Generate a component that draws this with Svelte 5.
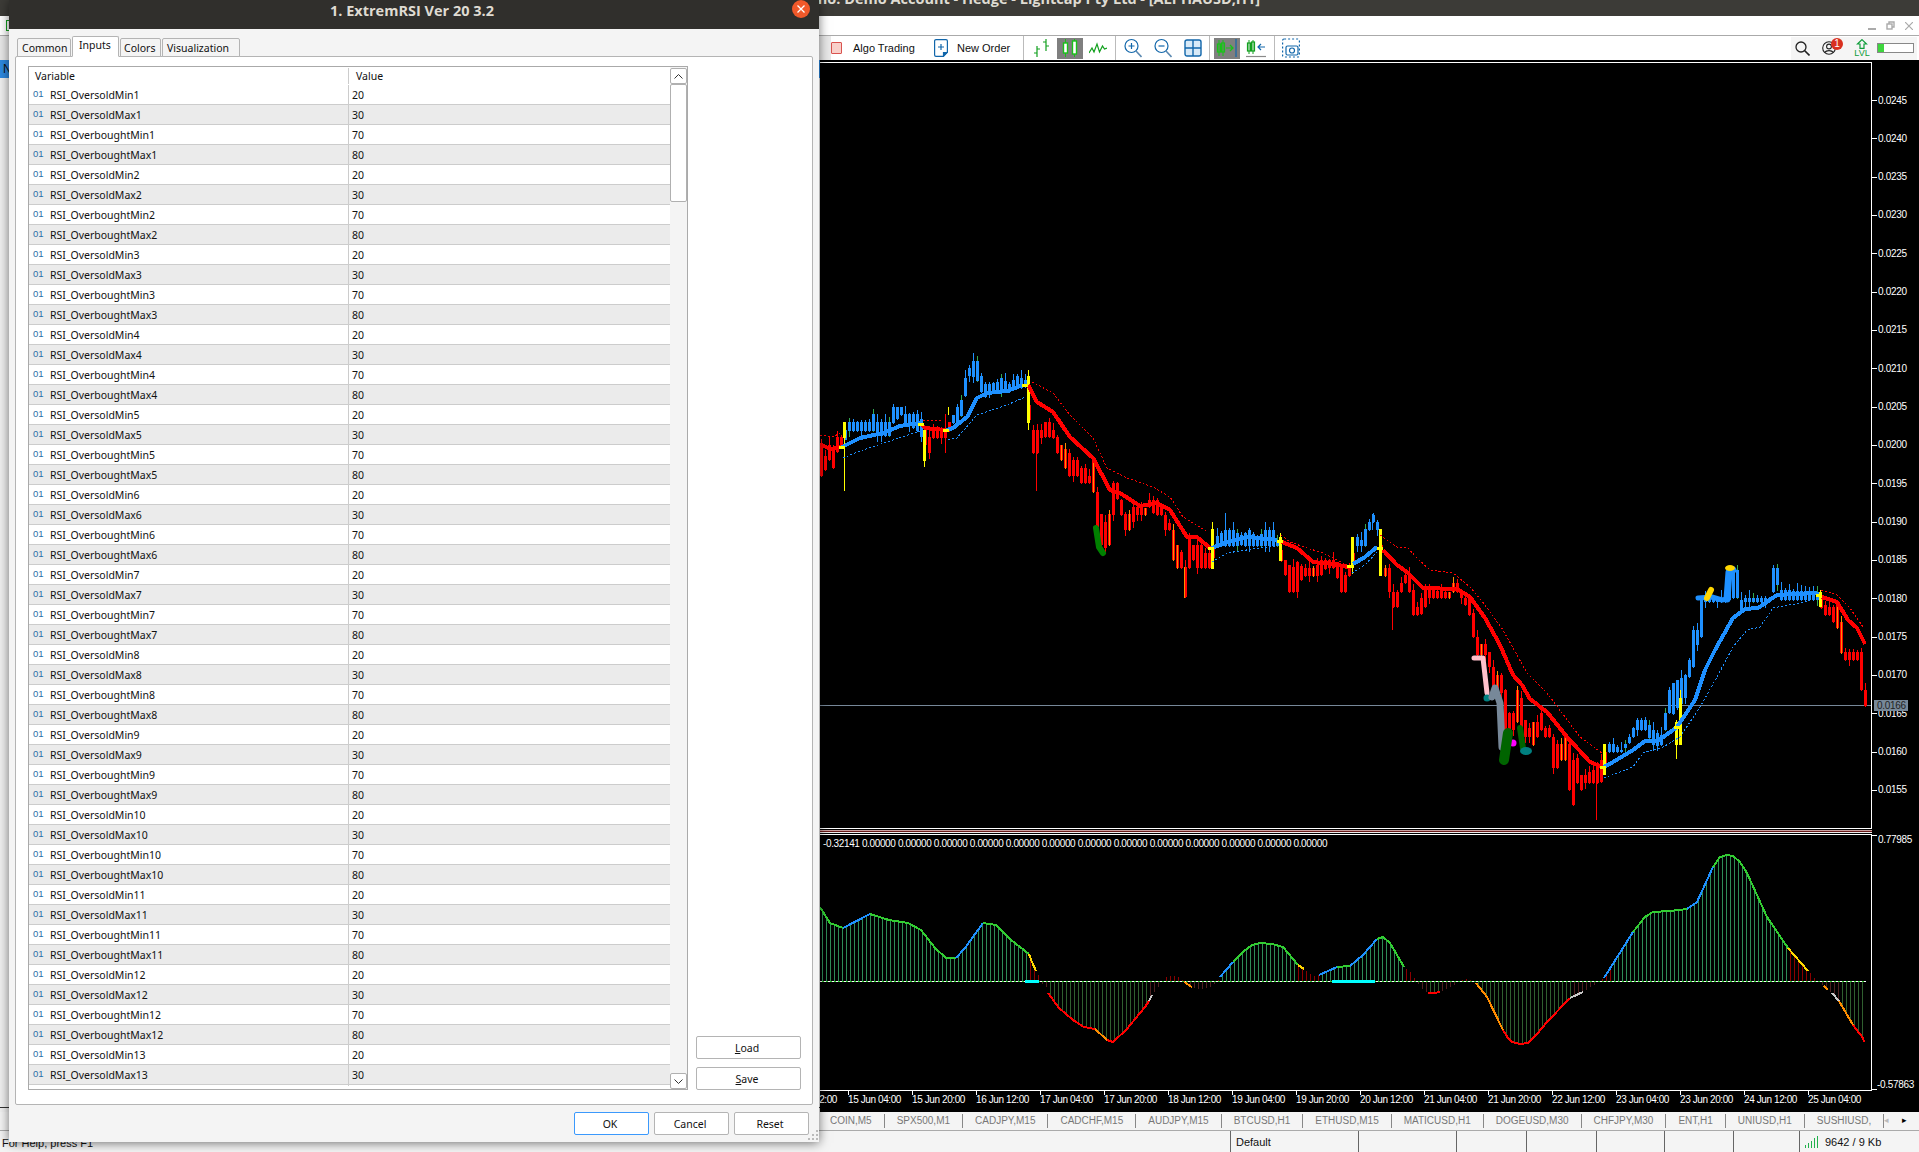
<script>
	// --- dialog rows
	const groups = Array.from({ length: 13 }, (_, i) => i + 1);
	const rows = groups
		.flatMap((n) => [
			{ name: `RSI_OversoldMin${n}`, value: 20 },
			{ name: `RSI_OversoldMax${n}`, value: 30 },
			{ name: `RSI_OverboughtMin${n}`, value: 70 },
			{ name: `RSI_OverboughtMax${n}`, value: 80 }
		])
		.slice(0, 50);

	// --- chart data, all in page coordinates
	const pts = (a) => a.map((p) => p.join(',')).join(' ');
	const hash = (i) => ((i * 37 + 11) * (i * 13 + 7)) % 97;

	const maSegments = [
		['#ff0000', [[820,444],[830,449],[842,447]]],
		['#1e90ff', [[842,447],[860,438],[883,433],[900,426],[920,423]]],
		['#ff0000', [[922,425],[925,428],[945,430]]],
		['#1e90ff', [[947,430],[953,428],[967,417],[977,398],[987,393],[1007,391],[1023,385]]],
		['#ff0000', [[1028,385],[1037,402],[1053,412],[1070,437],[1093,458],[1110,490],[1120,493],[1140,506],[1157,503],[1170,510],[1187,537],[1197,537],[1210,548]]],
		['#1e90ff', [[1212,548],[1227,542],[1247,537],[1277,540]]],
		['#ff0000', [[1282,542],[1297,548],[1313,562],[1333,564],[1348,567]]],
		['#1e90ff', [[1353,564],[1365,557],[1377,547]]],
		['#ff0000', [[1383,550],[1397,565],[1407,572],[1423,588],[1457,589],[1470,597],[1485,618],[1500,645],[1513,675],[1522,685],[1530,699],[1547,712],[1567,737],[1590,762],[1602,767]]],
		['#1e90ff', [[1604,767],[1613,762],[1633,750],[1645,741],[1658,741],[1677,727],[1695,700],[1705,670],[1715,650],[1733,618],[1745,609],[1758,608],[1777,595],[1817,593]]],
		['#ff0000', [[1822,597],[1837,602],[1848,620],[1857,628],[1865,644]]]
	];
	const maSwitches = [[842,447],[921,424],[946,430],[1025,385],[1211,548],[1280,541],[1350,566],[1380,548],[1603,767],[1677,727],[1819,595]];

	const dotSegments = [
		['#ff0000', [[820,435],[833,437],[840,433]]],
		['#1e90ff', [[843,458],[857,452],[887,442],[920,431]]],
		['#ff0000', [[923,420],[943,420]]],
		['#1e90ff', [[948,440],[957,438],[977,415],[1007,405],[1025,397]]],
		['#ff0000', [[1032,382],[1053,393],[1070,415],[1093,438],[1107,468],[1127,478],[1153,487],[1170,497],[1183,517],[1208,532]]],
		['#1e90ff', [[1212,562],[1227,553],[1253,549],[1277,546]]],
		['#ff0000', [[1281,535],[1290,542],[1307,548],[1323,553],[1347,565]]],
		['#1e90ff', [[1352,573],[1365,565],[1377,552]]],
		['#ff0000', [[1380,535],[1397,547],[1407,547],[1417,558],[1430,570],[1453,573],[1470,587],[1485,605],[1503,630],[1527,673],[1547,693],[1580,737],[1602,753]]],
		['#1e90ff', [[1604,778],[1633,767],[1643,753],[1663,747],[1680,737],[1700,707],[1717,677],[1733,647],[1747,630],[1760,627],[1773,608],[1800,603],[1817,598]]],
		['#ff0000', [[1821,590],[1837,595],[1850,608],[1863,627]]]
	];

	// [x, body top, body bottom]
	const candleKeys = [
		[820,444,476],[824,456,470],[828,445,460],[832,447,468],[836,437,452],[840,437,447],
		[848,422,431],[868,422,431],[872,414,431],[876,422,436],[888,422,436],[892,407,423],[900,407,415],[904,414,423],[912,414,428],[918,414,432],
		[928,437,453],[932,428,438],[944,428,438],[952,415,423],[956,407,423],[960,400,416],[964,378,396],[968,368,376],[972,361,377],[976,361,381],[980,376,392],[984,384,397],[988,384,392],[996,382,392],[1000,378,391],[1008,384,392],[1016,376,388],[1024,380,387],
		[1032,430,453],[1036,430,453],[1040,430,438],[1044,422,437],[1048,422,437],[1052,430,438],[1056,437,453],[1060,445,460],[1068,453,476],[1072,460,476],[1076,460,476],[1080,468,483],[1084,468,483],[1088,476,483],[1092,460,492],[1096,492,527],[1100,514,545],[1104,522,548],[1108,514,545],[1112,483,515],[1116,483,499],[1120,500,515],[1124,514,530],[1128,514,530],[1132,507,522],[1136,507,515],[1140,507,515],[1144,508,515],[1148,500,507],[1152,500,513],[1156,500,515],[1160,507,515],[1164,515,530],[1168,523,530],[1172,530,560],[1176,545,568],[1180,552,568],[1184,567,597],[1188,537,568],[1192,545,560],[1196,545,568],[1200,545,568],[1204,553,568],[1208,553,568],
		[1216,536,546],[1224,530,546],[1232,530,546],[1240,535,545],[1248,530,546],[1256,538,546],[1264,530,546],[1272,530,546],[1276,540,546],
		[1284,560,575],[1288,565,592],[1293,568,592],[1297,560,592],[1301,568,576],[1313,568,576],[1320,560,575],[1325,560,568],[1333,560,568],[1340,565,592],[1344,575,592],[1348,568,576],
		[1356,537,546],[1360,540,546],[1364,529,546],[1368,522,530],[1372,515,522],[1376,522,530],
		[1384,568,576],[1388,568,592],[1392,592,607],[1396,592,607],[1400,583,592],[1404,575,583],[1408,575,592],[1412,590,615],[1416,607,615],[1420,598,614],[1424,590,607],[1428,590,598],[1448,592,598],[1452,583,592],[1456,583,592],[1460,592,598],[1464,598,605],[1468,598,615],[1472,613,637],[1476,637,655],[1480,644,655],[1484,644,655],[1488,652,667],[1492,667,693],[1496,675,690],[1500,675,693],[1504,690,730],[1508,713,730],[1512,713,730],[1516,690,722],[1520,698,728],[1524,720,737],[1528,728,737],[1532,722,745],[1536,722,737],[1540,713,730],[1544,728,737],[1548,728,737],[1552,737,768],[1556,744,768],[1560,744,760],[1564,737,760],[1568,744,790],[1572,760,805],[1576,758,783],[1580,775,790],[1584,775,783],[1596,767,783],[1600,760,782],
		[1608,744,752],[1612,744,752],[1620,750,752],[1628,737,743],[1632,728,737],[1636,720,730],[1644,720,730],[1652,730,745],[1660,735,745],[1664,713,730],[1668,690,713],[1672,683,714],[1684,675,698],[1688,660,677],[1692,630,667],[1696,630,645],[1700,600,637],[1704,598,602],[1724,598,602],[1732,572,598],[1736,570,598],[1740,600,612],[1744,598,602],[1768,598,602],[1772,568,592],[1776,568,585],[1780,590,600],[1816,592,600],
		[1824,605,615],[1828,607,615],[1832,607,622],[1836,605,628],[1840,622,653],[1844,652,660],[1856,652,660],[1860,652,690],[1864,690,706]
	];
	const isBlue = (x) =>
		(x > 842 && x < 922) || (x > 948 && x < 1028) || (x > 1212 && x < 1280) || (x > 1352 && x < 1380) || (x > 1604 && x < 1820);

	const lerpKeys = (x) => {
		let i = candleKeys.findIndex((k) => k[0] >= x);
		if (i <= 0) return candleKeys[Math.max(i, 0)];
		const a = candleKeys[i - 1];
		const b = candleKeys[i];
		const t = (x - a[0]) / (b[0] - a[0]);
		return [x, a[1] + (b[1] - a[1]) * t, a[2] + (b[2] - a[2]) * t];
	};

	const candles = Array.from({ length: 262 }, (_, i) => {
		const x = 820 + 4 * i;
		const [, top, bot] = lerpKeys(x);
		const h = hash(i);
		const blue = isBlue(x);
		const orange = !blue && h % 5 === 0;
		return {
			x,
			top: Math.round(top),
			h: Math.max(2, Math.round(bot - top)),
			wt: Math.round(top - (h % 9)),
			wb: Math.round(bot + (h % 5 === 1 ? 6 : 1)),
			color: blue ? '#1e90ff' : '#ff0000',
			wick: blue ? (h % 4 === 0 ? '#32a852' : '#1e90ff') : orange ? '#ff8c00' : '#ff0000',
			inner: orange
		};
	});

	const longWicks = [
		['#ff0000', 1036, 453, 491],
		['#ff8c00', 1184, 567, 598],
		['#ff0000', 945, 414, 453],
		['#ff0000', 1392, 600, 630],
		['#ff0000', 1596, 783, 820],
		['#1e90ff', 1225, 513, 530],
		['#ff0000', 1572, 790, 805],
		['#1e90ff', 1372, 514, 530]
	];
	const yellows = [
		[843,422,16,438,491],[923,430,31,430,467],[1027,376,47,370,430],[1211,529,40,522,569],[1279,537,24,533,561],
		[1351,537,31,537,574],[1379,529,47,529,576],[1603,744,31,744,775],[1679,698,47,690,745],[1675,722,23,720,759],[1819,592,15,590,607]
	];

	// price axis
	const priceLabels = Array.from({ length: 19 }, (_, k) => ({
		text: (0.0245 - k * 0.0005).toFixed(4),
		y: 100 + k * 38.33
	}));

	const timeLabels = ['15 Jun 04:00','15 Jun 20:00','16 Jun 12:00','17 Jun 04:00','17 Jun 20:00','18 Jun 12:00','19 Jun 04:00','19 Jun 20:00','20 Jun 12:00','21 Jun 04:00','21 Jun 20:00','22 Jun 12:00','23 Jun 04:00','23 Jun 20:00','24 Jun 12:00','25 Jun 04:00'];

	const zeroY = 981;
	const macdSegments = [
		['#32cd32', [[820,907],[830,923],[843,928]]],
		['#1e90ff', [[843,928],[870,914]]],
		['#32cd32', [[870,914],[889,920],[908,923],[921,930],[935,948],[946,958],[956,958]]],
		['#1e90ff', [[956,958],[965,948],[983,923]]],
		['#32cd32', [[983,923],[996,925],[1011,940],[1029,954]]],
		['#ffd700', [[1029,954],[1032,962],[1036,971]]],
		['#ff0000', [[1048,993],[1059,1008],[1073,1020],[1084,1027],[1095,1029]]],
		['#ff8c00', [[1095,1029],[1107,1040]]],
		['#ff0000', [[1107,1040],[1113,1042],[1126,1030],[1145,1007],[1149,1001]]],
		['#c8c8c8', [[1149,1001],[1152,995]]],
		['#ff8c00', [[1184,982],[1192,987]]],
		['#1e90ff', [[1220,977],[1233,962]]],
		['#32cd32', [[1233,962],[1244,951],[1252,945],[1260,943],[1272,944],[1283,947],[1298,965]]],
		['#ffd700', [[1298,965],[1304,969]]],
		['#1e90ff', [[1319,975],[1337,967]]],
		['#32cd32', [[1337,967],[1350,966]]],
		['#1e90ff', [[1350,966],[1363,955],[1377,939]]],
		['#32cd32', [[1377,939],[1383,937],[1390,943],[1404,967]]],
		['#ff0000', [[1428,993],[1434,993],[1440,992]]],
		['#ff8c00', [[1476,983],[1487,997],[1503,1030]]],
		['#ff0000', [[1503,1030],[1508,1038],[1512,1042],[1520,1044],[1528,1043],[1537,1034],[1547,1022],[1570,998]]],
		['#c8c8c8', [[1570,998],[1583,992]]],
		['#1e90ff', [[1604,978],[1633,932]]],
		['#32cd32', [[1633,932],[1645,917],[1653,912],[1670,911],[1687,909]]],
		['#1e90ff', [[1687,909],[1697,902],[1713,867]]],
		['#32cd32', [[1713,867],[1720,857],[1727,855],[1733,856],[1740,862],[1747,873],[1767,917],[1788,948]]],
		['#ffd700', [[1788,948],[1808,971]]],
		['#ff8c00', [[1824,986],[1828,990]]],
		['#c8c8c8', [[1832,993],[1839,1001]]],
		['#ff8c00', [[1839,1001],[1853,1025]]],
		['#ff0000', [[1853,1025],[1863,1038],[1864,1042]]]
	];
	const gapPoints = [
		[1042,984],[1046,987],[1155,990],[1160,985],[1165,977],[1172,975],[1180,978],[1200,990],[1210,987],[1216,982],
		[1308,973],[1312,975],[1316,976],[1410,972],[1415,980],[1420,987],[1445,990],[1455,984],[1460,980],[1468,979],
		[1590,987],[1597,983],[1812,975],[1816,980],[1820,983]
	];
	const envelope = [...macdSegments.flatMap((s) => s[1]), ...gapPoints].sort((a, b) => a[0] - b[0]);
	const macdAt = (x) => {
		let i = envelope.findIndex((p) => p[0] >= x);
		if (i < 0) return envelope[envelope.length - 1][1];
		if (i === 0) return envelope[0][1];
		const a = envelope[i - 1];
		const b = envelope[i];
		return b[0] === a[0] ? b[1] : a[1] + ((b[1] - a[1]) * (x - a[0])) / (b[0] - a[0]);
	};
	const inRanges = (x, r) => r.some(([a, b]) => x >= a && x <= b);
	const histColor = (x, y) => {
		if (y < zeroY) {
			return inRanges(x, [[1030, 1047], [1154, 1218], [1298, 1318], [1404, 1424], [1445, 1475], [1590, 1610], [1788, 1822]]) ? '#8b0000' : '#2e8b57';
		}
		return inRanges(x, [[1048, 1148], [1428, 1440], [1476, 1570], [1840, 1866]]) ? '#2f5f2f' : '#4d2020';
	};
	const histogram = Array.from({ length: 262 }, (_, i) => {
		const x = 822 + 4 * i;
		const y = Math.round(macdAt(x));
		return { x, y: Math.min(y, zeroY), h: Math.abs(y - zeroY), color: histColor(x, y) };
	}).filter((b) => b.x < 1866);

	const symbolTabs = ['COIN,M5','SPX500,M1','CADJPY,M15','CADCHF,M15','AUDJPY,M15','BTCUSD,H1','ETHUSD,M15','MATICUSD,H1','DOGEUSD,M30','CHFJPY,M30','ENT,H1','UNIUSD,H1','SUSHIUSD,'];
	const zeros = Array(13).fill('0.00000').join(' ');
</script>

<div class="app">
	<div class="titlebar">
		<span>MetaTrader 5 no. Demo Account - Hedge - Lightcap Pty Ltd - [ALPHAUSD,H1]</span>
	</div>

	<div class="menubar">
		<span class="app-icon"></span>
		<div class="win-controls">
			<svg width="8" height="8" viewBox="0 0 8 8"><path d="M0 7h8" stroke="#aaa" stroke-width="2" /></svg>
			<svg width="9" height="9" viewBox="0 0 9 9" fill="none" stroke="#aaa" stroke-width="1.4"><rect x="1" y="3" width="5" height="5" /><path d="M3 3V1h5v5H6" /></svg>
			<svg width="8" height="8" viewBox="0 0 8 8"><path d="M0 0l8 8M8 0L0 8" stroke="#aaa" stroke-width="1.2" /></svg>
		</div>
	</div>

	<div class="toolbar">
		<div class="tb-stub"></div>
		<span class="algo-box"></span>
		<span class="tb-label algo-label">Algo Trading</span>
		<svg class="order-icon" width="14" height="18" viewBox="0 0 14 18" fill="none" stroke="#1166aa" stroke-width="1.2">
			<path d="M2 .6h10a1.4 1.4 0 0 1 1.4 1.4v11l-4 4.4H2A1.4 1.4 0 0 1 .6 16V2A1.4 1.4 0 0 1 2 .6z" />
			<path d="M7 5v6M4 8h6" />
			<path d="M13 13.5l-3.5 3.5v-3.5z" fill="#1166aa" />
		</svg>
		<span class="tb-label order-label">New Order</span>

		<div class="tb-group g-a">
			<svg width="18" height="20" viewBox="0 0 18 20" fill="none" stroke="#12a01e" stroke-width="1.2">
				<path d="M4 8v11M1 15h3M4 11h3" /><path d="M13 1v12M10 4h3M13 8h3" />
			</svg>
			<span class="tb-active">
				<svg width="18" height="20" viewBox="0 0 18 20" fill="none" stroke="#19c219" stroke-width="1.4">
					<path d="M4.5 1v18M13.5 1v18" stroke-width="1" /><rect x="2.5" y="5" width="4" height="10" fill="#fff" /><rect x="11.5" y="3" width="4" height="13" fill="#fff" />
				</svg>
			</span>
			<svg width="18" height="20" viewBox="0 0 18 20" fill="none" stroke="#12a01e" stroke-width="1.2">
				<path d="M0 15l3-5 2 4 3-8 2.500 8 3-6 2 3 2.500-1" />
			</svg>
		</div>

		<div class="tb-group g-b">
			<svg width="18" height="20" viewBox="0 0 18 20" fill="none" stroke="#1166aa" stroke-width="1.2">
				<circle cx="7.500" cy="8" r="6.500" /><path d="M4.500 8h6M7.500 5v6" /><path d="M12 13l5.500 6" stroke="#5a88b0" stroke-width="1.6" />
			</svg>
			<svg width="18" height="20" viewBox="0 0 18 20" fill="none" stroke="#1166aa" stroke-width="1.2">
				<circle cx="7.500" cy="8" r="6.500" /><path d="M4.500 8h6" /><path d="M12 13l5.500 6" stroke="#5a88b0" stroke-width="1.6" />
			</svg>
			<svg width="18" height="20" viewBox="0 0 18 20" fill="#d8eaf8" stroke="#1166aa" stroke-width="1.4">
				<rect x="1" y="2" width="16" height="16" rx="2" /><path d="M9 2v16M1 10h16" />
			</svg>
		</div>

		<div class="tb-group g-c">
			<span class="tb-active">
				<svg width="22" height="20" viewBox="0 0 22 20" fill="none" stroke="#19c219" stroke-width="1.200">
					<path d="M3 2v16M7 2v16" stroke-width="1" /><rect x="1.500" y="6" width="3" height="8" /><rect x="5.500" y="5" width="3" height="9" /><path d="M10 10h7M14 7l3 3-3 3" /><path d="M20 1v18" stroke="#1166aa" />
				</svg>
			</span>
			<svg width="20" height="20" viewBox="0 0 20 20" fill="none" stroke="#12a01e" stroke-width="1.200">
				<path d="M3 2v14M7 2v14" stroke-width="1" /><rect x="1.500" y="5" width="3" height="8" /><rect x="5.500" y="4" width="3" height="9" /><path d="M19 9h-7M15 6l-3 3 3 3" stroke="#1166aa" /><path d="M0 18.500h20" stroke="#8a8a8a" />
			</svg>
		</div>

		<div class="tb-group g-d">
			<svg width="18" height="20" viewBox="0 0 18 20" fill="none" stroke="#1166aa" stroke-width="1.200">
				<rect x=".6" y="1" width="16.800" height="18" rx="1.500" stroke-dasharray="2 2" />
				<rect x="4" y="8" width="12" height="9" rx="1.500" fill="#fff" /><circle cx="10" cy="12.500" r="2.500" />
			</svg>
		</div>

		<div class="tb-right">
			<svg width="15" height="15" viewBox="0 0 15 15" fill="none" stroke="#222" stroke-width="1.300"><circle cx="6" cy="6" r="5" /><path d="M9.500 9.500l5 5" stroke-width="1.600" /></svg>
			<span class="user">
				<svg width="14" height="14" viewBox="0 0 14 14" fill="none" stroke="#222" stroke-width="1.100"><circle cx="7" cy="7" r="6.300" /><circle cx="7" cy="5.500" r="2.400" /><path d="M3 11.500c1-2.500 7-2.500 8 0" /></svg>
				<span class="badge">1</span>
			</span>
			<span class="lvl">
				<svg width="12" height="10" viewBox="0 0 12 10" fill="none" stroke="#0f9d3a" stroke-width="1.200"><path d="M6 .6L10.500 5H8v4.400H4V5H1.500z" /></svg>
				<span class="lvl-text">LVL</span>
			</span>
			<span class="battery"><span class="battery-fill"></span></span>
		</div>
	</div>

	<div class="workspace">
		<div class="nav-stub">
			<div class="nav-head"></div>
			<div class="nav-item">N</div>
			<div class="nav-fill"></div>
			<div class="nav-line"></div>
		</div>

		<svg class="chart" width="1099" height="1052" viewBox="820 60 1099 1052">
			<rect x="820" y="60" width="1099" height="1052" fill="#000" />

			<!-- borders -->
			<g fill="none" stroke="#fff" shape-rendering="crispEdges">
				<path d="M820 62.500H1871.500V828.500H820" />
				<path d="M820 834.500H1871.500V1090.500H820" />
				<path d="M820 832.500H1871.500" stroke="#eee" />
				<path d="M820 830.500H1871.500" stroke="#c9a0a0" />
				<path d="M820 831.500H1871.500" stroke="#6b1a1a" />
			</g>

			<!-- current price -->
			<path d="M820 705.500H1871" stroke="#778899" shape-rendering="crispEdges" />

			<!-- candles -->
			<g shape-rendering="crispEdges">
				{#each candles as c}
					<rect x={c.x + 1} y={c.wt} width="1" height={c.wb - c.wt} fill={c.wick} />
					<rect x={c.x} y={c.top} width="3" height={c.h} fill={c.color} />
					{#if c.inner}
						<rect x={c.x + 1} y={c.top} width="1" height={c.h} fill="#ff8c00" />
					{/if}
				{/each}
				{#each longWicks as w}
					<rect x={w[1]} y={w[2]} width="1" height={w[3] - w[2]} fill={w[0]} />
				{/each}
				{#each yellows as y}
					<rect x={y[0] + 1} y={y[3]} width="1" height={y[4] - y[3]} fill="#ffff00" />
					<rect x={y[0]} y={y[1]} width="3" height={y[2]} fill="#ffff00" />
				{/each}
				<rect x="948" y="407" width="1" height="8" fill="#ffff00" />
			</g>

			<!-- moving average -->
			<g fill="none" shape-rendering="crispEdges">
				{#each dotSegments as s}
					<polyline points={pts(s[1])} stroke={s[0]} stroke-width="1" stroke-dasharray="2 2" />
				{/each}
				{#each maSegments as s}
					<polyline points={pts(s[1])} stroke={s[0]} stroke-width="4" stroke-linejoin="round" />
				{/each}
			</g>
			{#each maSwitches as p}
				<rect x={p[0] - 3} y={p[1] - 1} width="6" height="3" fill="#ffff00" />
			{/each}

			<!-- signal blobs -->
			<g fill="none" stroke-linecap="round" stroke-linejoin="round">
				<polyline points="1096,528 1099,547 1103,553" stroke="#008000" stroke-width="6" />
				<polyline points="1474,658 1483,658 1487,693" stroke="#ffc0cb" stroke-width="5" />
				<circle cx="1487" cy="698" r="3.500" fill="#008080" />
				<polyline points="1492,697 1495,688 1500,703 1502,747" stroke="#778899" stroke-width="7" />
				<circle cx="1513" cy="743" r="3.500" fill="#ff00ff" />
				<polyline points="1508,733 1504,760" stroke="#006400" stroke-width="10" />
				<polyline points="1520,728 1523,748" stroke="#006400" stroke-width="6" />
				<ellipse cx="1526" cy="751" rx="6" ry="4" fill="#008080" />
				<polyline points="1698,598 1712,597 1722,600 1727,599" stroke="#1e90ff" stroke-width="5" />
				<polyline points="1727,599 1729,572 1733,570" stroke="#1e90ff" stroke-width="7" />
				<polyline points="1711,590 1707,598" stroke="#ffd700" stroke-width="6" />
				<ellipse cx="1730" cy="568" rx="5" ry="3" fill="#ffd700" />
			</g>

			<!-- right axis -->
			<g class="axis">
				{#each priceLabels as p}
					<rect x="1872" y={Math.round(p.y)} width="5" height="1" fill="#fff" />
					<text x="1878" y={p.y + 3.500}>{p.text}</text>
				{/each}
				<rect x="1874" y="700" width="34" height="11" fill="#778899" />
				<text x="1877" y="709" class="price-tag">0.0166</text>
				<rect x="1872" y="835" width="5" height="1" fill="#fff" />
				<rect x="1872" y="1089" width="5" height="1" fill="#fff" />
				<text x="1878" y="843">0.77985</text>
				<text x="1877" y="1088">-0.57863</text>
			</g>

			<!-- indicator window -->
			<text class="axis values" x="823" y="847">-0.32141 {zeros}</text>
			<g shape-rendering="crispEdges">
				{#each histogram as b}
					<rect x={b.x} y={b.y} width="1" height={b.h} fill={b.color} />
				{/each}
				<path d="M820 981.500H1866" stroke="#32cd32" />
				<path d="M820 981.500H1866" stroke="#fff" stroke-dasharray="2 2" />
				<rect x="1025" y="980" width="14" height="3" fill="#00ffff" />
				<rect x="1332" y="980" width="43" height="3" fill="#00ffff" />
			</g>
			<g fill="none" stroke-width="2">
				{#each macdSegments as s}
					<polyline points={pts(s[1])} stroke={s[0]} shape-rendering="crispEdges" />
				{/each}
			</g>

			<!-- time axis -->
			<g class="axis">
				<text x="784" y="1103" class="time">14 Jun 12:00</text>
				{#each timeLabels as t, i}
					<rect x={848 + 64 * i} y="1091" width="1" height="4" fill="#fff" />
					<text x={848 + 64 * i} y="1103" class="time">{t}</text>
				{/each}
			</g>
		</svg>
	</div>

	<div class="symbol-tabs">
		{#each symbolTabs as t}
			<span class="symbol-tab">{t}</span>
		{/each}
		<span class="arrow-l">◂</span>
		<span class="arrow-r">▸</span>
	</div>

	<div class="statusbar">
		<span class="help">For Help, press F1</span>
		<span class="cell">Default</span>
		<span class="cell"></span>
		<span class="cell"></span>
		<span class="cell"></span>
		<span class="cell"></span>
		<span class="cell"></span>
		<span class="cell"></span>
		<span class="cell net">
			<svg width="14" height="12" viewBox="0 0 14 12" fill="#22b14c"><rect x="0" y="9" width="1" height="3" /><rect x="3" y="7" width="1" height="5" /><rect x="6" y="5" width="1" height="7" /><rect x="9" y="2" width="1" height="10" /><rect x="12" y="0" width="1" height="12" /></svg>
			9642 / 9 Kb
		</span>
	</div>

	<div class="dialog">
		<div class="dlg-title">
			<span>1. ExtremRSI Ver 20 3.2</span>
			<span class="dlg-close">
				<svg width="10" height="10" viewBox="0 0 10 10"><path d="M1.500 1.500l7 7M8.500 1.500l-7 7" stroke="#fff" stroke-width="1.300" /></svg>
			</span>
		</div>

		<div class="dlg-tabs">
			<span class="dlg-tab t-common">Common</span>
			<span class="dlg-tab t-inputs">Inputs</span>
			<span class="dlg-tab t-colors">Colors</span>
			<span class="dlg-tab t-vis">Visualization</span>
		</div>

		<div class="panel">
			<div class="table">
				<div class="list">
					<div class="thead">
						<span class="th-var">Variable</span>
						<span class="th-val">Value</span>
					</div>
					{#each rows as r}
						<div class="row">
							<span class="c-var"><span class="type">01</span>{r.name}</span>
							<span class="c-val">{r.value}</span>
						</div>
					{/each}
				</div>
				<div class="scroll">
					<span class="sb-btn">
						<svg width="9" height="5" viewBox="0 0 9 5" fill="none" stroke="#333"><path d="M.5 4.500l4-4 4 4" /></svg>
					</span>
					<span class="sb-thumb"></span>
					<span class="sb-track"></span>
					<span class="sb-btn">
						<svg width="9" height="5" viewBox="0 0 9 5" fill="none" stroke="#333"><path d="M.5 .5l4 4 4-4" /></svg>
					</span>
				</div>
			</div>
			<div class="side">
				<button class="btn side-btn"><u>L</u>oad</button>
				<button class="btn side-btn"><u>S</u>ave</button>
			</div>
		</div>

		<div class="footer">
			<button class="btn foot-btn ok">OK</button>
			<button class="btn foot-btn">Cancel</button>
			<button class="btn foot-btn">Reset</button>
		</div>
		<svg class="grip" width="12" height="12" viewBox="0 0 12 12" fill="#bbb">
			<rect x="9" y="1" width="2" height="2" /><rect x="5" y="5" width="2" height="2" /><rect x="9" y="5" width="2" height="2" /><rect x="1" y="9" width="2" height="2" /><rect x="5" y="9" width="2" height="2" /><rect x="9" y="9" width="2" height="2" />
		</svg>
	</div>
</div>

<style>
	:global(body) {
		margin: 0;
		background: #f0f0f0;
	}

	.app {
		position: relative;
		width: 1919px;
		height: 1152px;
		overflow: hidden;
		display: flex;
		flex-direction: column;
		font-family: 'Liberation Sans', sans-serif;
		font-size: 11px;
		color: #111;
	}

	.titlebar {
		height: 16px;
		flex: none;
		background: #3c3b37;
		overflow: hidden;
		display: flex;
		justify-content: flex-end;
		padding-right: 659px;
		color: #dfdbd2;
		font: bold 14.5px 'Open Sans', sans-serif;
		line-height: 8px;
		white-space: nowrap;
	}

	.titlebar span {
		display: block;
		margin-top: -5px;
	}

	.menubar {
		height: 19px;
		flex: none;
		background: #fff;
		border-bottom: 1px solid #aaa;
		display: flex;
		align-items: center;
		justify-content: space-between;
	}

	.app-icon {
		width: 8px;
		height: 9px;
		margin-left: 6px;
		border: 1px solid #12a01e;
	}

	.win-controls {
		display: flex;
		align-items: center;
		gap: 10px;
		margin-right: 6px;
	}

	.toolbar {
		height: 24px;
		flex: none;
		background: #fff;
		display: flex;
		align-items: center;
	}

	.tb-stub {
		width: 831px;
		height: 100%;
		flex: none;
		background: #e8e8e8;
	}

	.algo-box {
		width: 9px;
		height: 10px;
		flex: none;
		background: #f9d0ca;
		border: 1px solid #d9534f;
		border-radius: 1px;
	}

	.tb-label {
		font-size: 11px;
		white-space: nowrap;
		color: #111;
	}

	.algo-label {
		width: 62px;
		margin-left: 11px;
	}

	.order-icon {
		margin-left: 19px;
		flex: none;
	}

	.order-label {
		width: 52px;
		margin-left: 9px;
	}

	.tb-group {
		display: flex;
		align-items: center;
		height: 100%;
		border-left: 1px solid #bbb;
		box-sizing: border-box;
	}

	.g-a {
		margin-left: 14px;
		padding: 0 8px 0 9px;
		gap: 6px;
	}

	.g-b {
		padding: 0 7px 0 8px;
		gap: 12px;
	}

	.g-c {
		padding: 0 8px 0 4px;
		gap: 6px;
	}

	.g-d {
		padding: 0 0 0 7px;
	}

	.tb-active {
		width: 26px;
		height: 21px;
		background: #7f7f7f;
		display: flex;
		align-items: center;
		justify-content: center;
	}

	.tb-right {
		width: 126px;
		height: 23px;
		margin-left: auto;
		margin-right: 2px;
		background: #f5f5f5;
		display: flex;
		align-items: center;
		padding-left: 4px;
		box-sizing: border-box;
	}

	.user {
		position: relative;
		margin-left: 12px;
		display: flex;
	}

	.badge {
		position: absolute;
		top: -3px;
		left: 9px;
		width: 12px;
		height: 12px;
		border-radius: 50%;
		background: #d9301f;
		color: #fff;
		font-size: 10px;
		line-height: 12px;
		text-align: center;
	}

	.lvl {
		margin-left: 19px;
		width: 14px;
		display: flex;
		flex-direction: column;
		align-items: center;
	}

	.lvl-text {
		color: #0f9d3a;
		font-size: 9px;
		line-height: 9px;
	}

	.battery {
		margin-left: 8px;
		width: 35px;
		height: 8px;
		border: 1px solid #888;
		background: #fff;
		display: flex;
	}

	.battery-fill {
		width: 6px;
		background: #3ed63e;
	}

	.workspace {
		flex: 1;
		display: flex;
		min-height: 0;
		background: #000;
	}

	.nav-stub {
		width: 820px;
		flex: none;
		display: flex;
		flex-direction: column;
		background: #f0f0f0;
	}

	.nav-head {
		height: 0;
	}

	.nav-item {
		height: 18px;
		background: #2d89e0;
		padding-left: 3px;
		line-height: 18px;
		font-size: 12px;
	}

	.nav-fill {
		flex: 1;
		border-bottom: 1px solid #333;
	}

	.nav-line {
		height: 4px;
	}

	.chart {
		display: block;
		flex: none;
	}

	.axis,
	.axis text {
		font-family: 'Liberation Sans', sans-serif;
		font-size: 10px;
		letter-spacing: -0.3px;
		fill: #fff;
	}

	.axis.values {
		letter-spacing: -0.37px;
	}

	.axis .price-tag {
		fill: #222;
	}

	.axis .time {
		letter-spacing: -0.4px;
	}

	.symbol-tabs {
		height: 18px;
		flex: none;
		background: #f4f4f4;
		border-bottom: 1px solid #aaa;
		display: flex;
		align-items: center;
		padding-left: 818px;
		position: relative;
	}

	.symbol-tab {
		padding: 0 12px;
		color: #777;
		font-size: 10px;
		white-space: nowrap;
		border-right: 1px solid #888;
		line-height: 14px;
	}

	.symbol-tab:last-of-type {
		border-right: 0;
		width: 52px;
		overflow: hidden;
		flex: none;
		padding-right: 0;
	}

	.arrow-l,
	.arrow-r {
		position: absolute;
		font-size: 9px;
		top: 3px;
	}

	.arrow-l {
		left: 1884px;
		color: #bbb;
	}

	.arrow-r {
		left: 1902px;
		color: #000;
	}

	.statusbar {
		height: 21px;
		flex: none;
		background: #f4f4f4;
		display: grid;
		grid-template-columns: 1230px 128px 98px 70px 70px 68px 69px 66px 120px;
		align-items: center;
		font-size: 11px;
	}

	.help {
		padding: 2px 0 0 2px;
		white-space: nowrap;
	}

	.cell {
		height: 100%;
		border-left: 1px solid #666;
		box-sizing: border-box;
		padding-left: 5px;
		line-height: 22px;
		white-space: nowrap;
	}

	.net {
		display: flex;
		align-items: center;
		gap: 6px;
	}

	/* dialog lies over the terminal */
	.dialog {
		position: absolute;
		left: 9px;
		top: 0;
		width: 810px;
		height: 1142px;
		display: flex;
		flex-direction: column;
		background: #f4f4f4;
		box-shadow: 0 1px 10px rgb(0 0 0 / 0.55);
		font-family: 'Noto Sans', sans-serif;
		font-size: 10.5px;
	}

	.dlg-title {
		position: relative;
		height: 29px;
		flex: none;
		background: #302f2c;
		color: #dfdbd2;
		font: bold 14.5px 'Open Sans', sans-serif;
		display: flex;
		align-items: center;
		justify-content: center;
	}

	.dlg-title > span:first-child {
		margin: -8px 4px 0 0;
	}

	.dlg-close {
		position: absolute;
		top: 0;
		right: 9px;
		width: 18px;
		height: 18px;
		border-radius: 50%;
		background: #f0592a;
		display: flex;
		align-items: center;
		justify-content: center;
	}

	.dlg-tabs {
		height: 28px;
		flex: none;
		display: flex;
		align-items: flex-end;
		padding-left: 8px;
		box-sizing: border-box;
		margin-bottom: -1px;
		position: relative;
		z-index: 1;
	}

	.dlg-tab {
		box-sizing: border-box;
		height: 19px;
		line-height: 18px;
		text-align: left;
		padding-left: 4px;
		background: #f4f4f4;
		border: 1px solid #b4b4b4;
		border-bottom: 1px solid #b4b4b4;
		border-radius: 2px 2px 0 0;
		margin-right: 1px;
	}

	.t-common {
		width: 54px;
	}

	.t-inputs {
		width: 47px;
		height: 21px;
		background: #fff;
		border-bottom-color: #fff;
		line-height: 17px;
		padding-left: 6px;
	}

	.t-colors {
		width: 41px;
		padding-left: 3px;
	}

	.t-vis {
		width: 78px;
	}

	.panel {
		flex: 1;
		min-height: 0;
		margin: 0 6px;
		background: #fff;
		border: 1px solid #b4b4b4;
		border-radius: 2px;
		display: flex;
		gap: 8px;
		padding: 9px 12px 14px;
	}

	.table {
		width: 660px;
		flex: none;
		box-sizing: border-box;
		border: 1px solid #aaa;
		display: flex;
		overflow: hidden;
	}

	.list {
		flex: 1;
		min-width: 0;
		overflow: hidden;
	}

	.thead {
		height: 18px;
		display: grid;
		grid-template-columns: 319px 1fr;
		align-items: center;
	}

	.th-var {
		padding-left: 6px;
	}

	.th-val {
		border-left: 1px solid #ccc;
		padding-left: 7px;
		line-height: 16px;
	}

	.row {
		height: 20px;
		box-sizing: border-box;
		border-bottom: 1px solid #ccc;
		display: grid;
		grid-template-columns: 319px 1fr;
		line-height: 21px;
	}

	.row:nth-of-type(odd) {
		background: #ebebeb;
	}

	.c-var {
		display: flex;
		white-space: nowrap;
	}

	.type {
		width: 21px;
		padding-left: 4px;
		box-sizing: border-box;
		color: #2a6fa8;
		font: 9.5px/18px 'Liberation Sans', sans-serif;
		flex: none;
	}

	.c-val {
		border-left: 1px solid #ccc;
		padding-left: 3px;
	}

	.scroll {
		width: 17px;
		flex: none;
		background: #f4f4f4;
		display: flex;
		flex-direction: column;
		padding-top: 1px;
		box-sizing: border-box;
	}

	.sb-btn {
		height: 16px;
		flex: none;
		box-sizing: border-box;
		background: #fff;
		border: 1px solid #b0b0b0;
		border-radius: 2px;
		display: flex;
		align-items: center;
		justify-content: center;
	}

	.sb-thumb {
		height: 118px;
		flex: none;
		box-sizing: border-box;
		background: #fff;
		border: 1px solid #b0b0b0;
		border-radius: 2px;
	}

	.sb-track {
		flex: 1;
	}

	.side {
		width: 105px;
		flex: none;
		display: flex;
		flex-direction: column;
		justify-content: flex-end;
		gap: 8px;
	}

	.btn {
		box-sizing: border-box;
		height: 23px;
		padding: 0 3px 0 0;
		background: #fff;
		border: 1px solid #b4b4b4;
		border-radius: 2px;
		font-family: 'Noto Sans', sans-serif;
		font-size: 10.5px;
		color: #111;
	}

	.footer {
		height: 37px;
		flex: none;
		box-sizing: border-box;
		display: flex;
		justify-content: flex-end;
		gap: 5px;
		padding: 7px 10px 0 0;
	}

	.foot-btn {
		width: 75px;
	}

	.ok {
		border-color: #3b99fc;
		width: 75px;
	}

	.grip {
		position: absolute;
		right: 0;
		bottom: 1px;
	}
</style>
